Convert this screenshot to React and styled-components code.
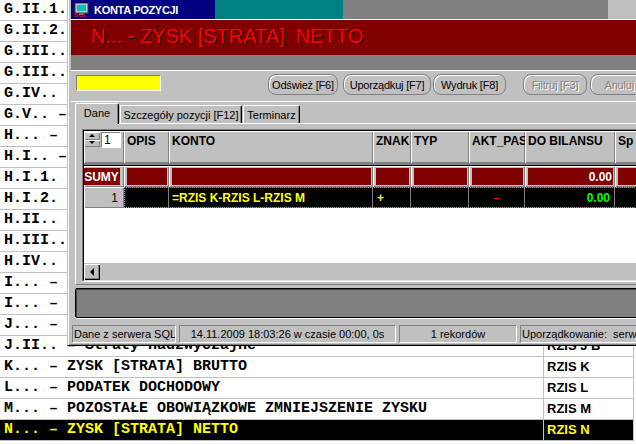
import React from "react";
import styled, { createGlobalStyle } from "styled-components";

const GlobalStyle = createGlobalStyle`
  html, body {
    margin: 0;
    padding: 0;
    background: #ffffff;
  }
  body {
    width: 636px;
    height: 444px;
    overflow: hidden;
  }
`;

const Screen = styled.div`
  position: relative;
  width: 636px;
  height: 444px;
  overflow: hidden;
  background: #ffffff;
  font-family: "Liberation Sans", Arial, sans-serif;
`;

/* ---------- background list ---------- */

const List = styled.div`
  display: flex;
  flex-direction: column;
  width: 633px;
  border-right: 1px solid #c0c0c0;
`;

const ListRow = styled.div`
  display: grid;
  grid-template-columns: 544px 1fr;
  height: 20px;
  border-bottom: 1px solid #c0c0c0;
  background: ${(p) => (p.$active ? "#000000" : "#ffffff")};
  color: ${(p) => (p.$active ? "#ffff00" : "#000000")};
`;

const NameCell = styled.div`
  font-family: "Liberation Mono", "DejaVu Sans Mono", monospace;
  font-weight: bold;
  font-size: 15px;
  line-height: 20px;
  padding-left: 4px;
  white-space: pre;
  overflow: hidden;
  border-right: 1px solid #c0c0c0;
`;

const CodeCell = styled.div`
  font-weight: bold;
  font-size: 13px;
  line-height: 20px;
  padding-left: 3px;
  white-space: nowrap;
  overflow: hidden;
`;

/* ---------- window ---------- */

const Window = styled.div`
  position: absolute;
  left: 67px;
  top: 0;
  width: 640px;
  display: flex;
  flex-direction: column;
  background: #c0c0c0;
  border-left: 1px solid #c0c0c0;
  border-bottom: 1px solid #000000;
  box-shadow: inset 1px 0 #ffffff, inset 0 -1px #808080;
  padding: 0 0 2px 3px;
  color: #000000;
`;

const TitleBar = styled.div`
  display: flex;
  align-items: center;
  gap: 4px;
  height: 19px;
  padding-left: 3px;
  background: linear-gradient(
    to right,
    #000080 0,
    #000080 144px,
    #008080 144px,
    #008080 272px,
    #808080 272px,
    #808080 537px,
    #c0c0c0 537px
  );
  border-bottom: 1px solid #ffffff;
`;

const TitleText = styled.span`
  color: #ffffff;
  font-weight: bold;
  font-size: 11px;
  letter-spacing: -0.3px;
  margin-left: 1px;
`;

const Banner = styled.div`
  height: 35px;
  line-height: 33px;
  padding-left: 20px;
  background: #800000;
  color: #ff0000;
  font-size: 20px;
  white-space: pre;
  text-shadow: 1px 1px 0 #000000;
`;

const GrayBand = styled.div`
  height: 15px;
  background: #808080;
  border-bottom: 1px solid #ffffff;
`;

const Toolbar = styled.div`
  display: flex;
  align-items: flex-start;
  height: 26px;
  padding: 4px 0 0 5px;
  border-bottom: 1px solid #ffffff;
`;

const YellowBox = styled.div`
  width: 83px;
  height: 14px;
  background: #ffff00;
  border: 1px solid;
  border-color: #808080 #ffffff #ffffff #808080;
`;

const ToolButton = styled.div`
  box-sizing: border-box;
  flex: none;
  width: ${(p) => p.$w}px;
  height: 21px;
  margin-left: ${(p) => p.$ml}px;
  margin-top: ${(p) => p.$mt || -1}px;
  display: flex;
  align-items: center;
  justify-content: center;
  border: 1px solid #808080;
  border-radius: 8px;
  box-shadow: inset 1px 1px #ffffff;
  font-size: 11px;
  letter-spacing: -0.2px;
  white-space: nowrap;
  overflow: hidden;
  color: ${(p) => (p.$disabled ? "#808080" : "#000000")};
  text-shadow: ${(p) => (p.$disabled ? "1px 1px 0 #ffffff" : "none")};
`;

/* ---------- tabs ---------- */

const TabStrip = styled.div`
  display: flex;
  align-items: flex-end;
  height: 21px;
  padding-left: 4px;
  position: relative;
  z-index: 1;
`;

const Tab = styled.div`
  box-sizing: border-box;
  width: ${(p) => p.$w}px;
  height: ${(p) => (p.$active ? 21 : 18)}px;
  margin-right: 1px;
  margin-bottom: ${(p) => (p.$active ? -1 : 0)}px;
  display: flex;
  align-items: center;
  justify-content: center;
  padding-bottom: ${(p) => (p.$active ? 2 : 0)}px;
  background: #c0c0c0;
  border-top: 1px solid #ffffff;
  border-left: 1px solid #ffffff;
  border-right: 1px solid #000000;
  border-radius: 2px 2px 0 0;
  box-shadow: inset -1px 0 #808080;
  font-size: 11px;
  white-space: nowrap;
`;

const TabPage = styled.div`
  margin-left: 4px;
  padding: 5px 0 2px 6px;
  border-top: 1px solid #ffffff;
  border-left: 1px solid #ffffff;
  border-bottom: 1px solid #808080;
`;

/* ---------- data grid ---------- */

const GridFrame = styled.div`
  border-top: 1px solid #808080;
  border-left: 1px solid #808080;
  border-bottom: 1px solid #ffffff;
`;

const GridInner = styled.div`
  display: flex;
  flex-direction: column;
  height: 149px;
  background: #ffffff;
  border-top: 1px solid #000000;
  border-left: 1px solid #000000;
  border-bottom: 1px solid #dfdfdf;
  overflow: hidden;
`;

const GridRow = styled.div`
  display: flex;
  flex: none;
  height: ${(p) => p.$h}px;
`;

const HeadCell = styled.div`
  box-sizing: border-box;
  flex: none;
  width: ${(p) => p.$w}px;
  height: 100%;
  padding: 3px 0 0 3px;
  background: #c0c0c0;
  box-shadow: inset 1px 1px #ffffff, inset -1px -1px #808080;
  font-size: 12px;
  font-weight: bold;
  white-space: nowrap;
  overflow: hidden;
`;

const IndicatorHead = styled(HeadCell)`
  display: flex;
  align-items: flex-start;
  gap: 1px;
  padding: 1px 0 0 0;
`;

const Spinner = styled.div`
  display: flex;
  flex-direction: column;
  width: 16px;
  height: 15px;
`;

const SpinHalf = styled.div`
  flex: 1;
  display: flex;
  align-items: center;
  justify-content: center;
  background: #c0c0c0;
  box-shadow: inset 1px 1px #ffffff, inset -1px -1px #808080;
`;

const SpinInput = styled.div`
  box-sizing: border-box;
  width: 20px;
  height: 16px;
  padding-left: 2px;
  background: #ffffff;
  border: 1px solid;
  border-color: #808080 #ffffff #ffffff #808080;
  font-size: 12px;
  font-weight: normal;
  line-height: 14px;
`;

const Separator = styled.div`
  flex: none;
  height: 2px;
  background: #808080;
  border-bottom: 1px solid #000000;
`;

const SumCell = styled.div`
  box-sizing: border-box;
  flex: none;
  display: flex;
  width: ${(p) => p.$w}px;
  height: 100%;
  padding: 2px 2px 2px 3px;
  background: #c0c0c0;
  box-shadow: inset 1px 1px #ffffff, inset -1px -1px #808080;
`;

const SumFill = styled.div`
  flex: 1;
  display: flex;
  align-items: center;
  justify-content: ${(p) => p.$align || "flex-end"};
  padding-right: 1px;
  background: #800000;
  color: #ffffff;
  font-size: 12px;
  font-weight: bold;
`;

const RowIndicator = styled.div`
  box-sizing: border-box;
  flex: none;
  width: 40px;
  height: 100%;
  padding-right: 6px;
  display: flex;
  align-items: center;
  justify-content: flex-end;
  background: #c0c0c0;
  box-shadow: inset 1px 1px #ffffff, inset -1px -1px #808080;
  font-size: 12px;
`;

const FocusRow = styled.div`
  display: flex;
  flex: 1;
  background: #000000;
  border: 1px dotted #00ff00;
  border-right: none;
`;

const DataCell = styled.div`
  box-sizing: border-box;
  flex: none;
  display: flex;
  align-items: center;
  justify-content: ${(p) => p.$align || "flex-start"};
  width: ${(p) => p.$w}px;
  padding: 0 ${(p) => p.$pr || 0}px 0 ${(p) => p.$pl || 0}px;
  border-right: 1px solid #808080;
  color: ${(p) => p.$color || "#ffff00"};
  font-size: 12px;
  font-weight: bold;
  white-space: nowrap;
  overflow: hidden;
`;

const GridBody = styled.div`
  flex: 1;
  background: #ffffff;
`;

const HScroll = styled.div`
  display: flex;
  flex: none;
  height: 16px;
  background: #c0c0c0;
  border-top: 1px solid #c0c0c0;
`;

const ScrollButton = styled.div`
  width: 16px;
  height: 16px;
  display: flex;
  align-items: center;
  justify-content: center;
  background: #c0c0c0;
  box-shadow: inset 1px 1px #ffffff, inset -1px -1px #000000, inset -2px -2px #808080;
`;

/* ---------- bottom area ---------- */

const GrayPanel = styled.div`
  height: 28px;
  margin: 3px 0 0 4px;
  background: #808080;
  border: 1px solid #000000;
  border-radius: 2px 0 0 2px;
  box-shadow: inset 1px 1px #404040, 0 1px #ffffff;
`;

const StatusBar = styled.div`
  display: flex;
  gap: 3px;
  margin: 7px 0 0 1px;
`;

const StatusPanel = styled.div`
  box-sizing: border-box;
  flex: none;
  width: ${(p) => p.$w}px;
  height: 18px;
  display: flex;
  align-items: center;
  justify-content: ${(p) => (p.$center ? "center" : "flex-start")};
  padding-left: ${(p) => (p.$center ? 0 : 1)}px;
  border: 1px solid;
  border-color: #808080 #ffffff #ffffff #808080;
  font-size: 11px;
  white-space: pre;
  overflow: hidden;
`;

/* ---------- data ---------- */

const listRows = [
  ["G.II.1.", "od jednostek powiązanych", "RZIS G II 1"],
  ["G.II.2.", "od pozostałych jednostek", "RZIS G II 2"],
  ["G.III..", "Zysk ze zbycia inwestycji", "RZIS G III"],
  ["G.III..", "Aktualizacja wartości", "RZIS G III"],
  ["G.IV..", "Aktualizacja wartości inwestycji", "RZIS G IV"],
  ["G.V..", "Inne", "RZIS G V"],
  ["H...", "KOSZTY FINANSOWE", "RZIS H"],
  ["H.I..", "Odsetki, w tym:", "RZIS H I"],
  ["H.I.1.", "dla jednostek powiązanych", "RZIS H I 1"],
  ["H.I.2.", "dla pozostałych jednostek", "RZIS H I 2"],
  ["H.II..", "Strata ze zbycia inwestycji", "RZIS H II"],
  ["H.III..", "Aktualizacja wartości inwestycji", "RZIS H III"],
  ["H.IV..", "Inne", "RZIS H IV"],
  ["I...", "ZYSK [STRATA] Z DZIAŁALNOŚCI GOSPODARCZEJ", "RZIS I"],
  ["I...", "ZYSK [STRATA] Z DZIAŁALNOŚCI GOSPODARCZEJ", "RZIS I"],
  ["J...", "WYNIK ZDARZEŃ NADZWYCZAJNYCH", "RZIS J"],
  ["J.II..", "Straty nadzwyczajne", "RZIS J B"],
  ["K...", "ZYSK [STRATA] BRUTTO", "RZIS K"],
  ["L...", "PODATEK DOCHODOWY", "RZIS L"],
  ["M...", "POZOSTAŁE OBOWIĄZKOWE ZMNIEJSZENIE ZYSKU", "RZIS M"],
  ["N...", "ZYSK [STRATA] NETTO", "RZIS N"],
];

const columns = [
  { key: "opis", title: "OPIS", w: 45 },
  { key: "konto", title: "KONTO", w: 204 },
  { key: "znak", title: "ZNAK", w: 38 },
  { key: "typ", title: "TYP", w: 58 },
  { key: "akt", title: "AKT_PAS", w: 56 },
  { key: "do", title: "DO BILANSU", w: 90 },
  { key: "sp", title: "Sp", w: 60 },
];

function WindowIcon() {
  return (
    <svg width="15" height="14" viewBox="0 0 15 14">
      <rect x="1" y="0" width="13" height="10" fill="#c0c0c0" />
      <rect x="1" y="0" width="13" height="10" fill="none" stroke="#404040" strokeWidth="1" />
      <rect x="3" y="2" width="9" height="6" fill="#00c0c0" />
      <rect x="5" y="10" width="5" height="2" fill="#808080" />
      <text x="0" y="13.5" fontSize="6" fontWeight="bold" fill="#ff0000" fontFamily="Liberation Sans, sans-serif">
        SQL
      </text>
    </svg>
  );
}

function Arrow({ dir }) {
  const pts = {
    up: "0,3 3,0 6,3",
    down: "0,0 3,3 6,0",
    left: "4,0 0,4 4,8",
  };
  const size = dir === "left" ? [5, 8] : [7, 4];
  return (
    <svg width={size[0]} height={size[1]} viewBox={`0 0 ${size[0]} ${size[1]}`}>
      <polygon points={pts[dir]} fill="#000000" />
    </svg>
  );
}

export default function App() {
  return (
    <Screen>
      <GlobalStyle />
      <List>
        {listRows.map(([code, name, konto], i) => (
          <ListRow key={i} $active={i === listRows.length - 1}>
            <NameCell>{`${code} – ${name}`}</NameCell>
            <CodeCell>{konto}</CodeCell>
          </ListRow>
        ))}
      </List>

      <Window>
        <TitleBar>
          <WindowIcon />
          <TitleText>KONTA POZYCJI</TitleText>
        </TitleBar>
        <Banner>{"N... - ZYSK [STRATA]  NETTO"}</Banner>
        <GrayBand />
        <Toolbar>
          <YellowBox />
          <ToolButton $w={70} $ml={107}>Odśwież [F6]</ToolButton>
          <ToolButton $w={88} $ml={5}>Uporządkuj [F7]</ToolButton>
          <ToolButton $w={73} $ml={2} $mt={0}>Wydruk [F8]</ToolButton>
          <ToolButton $w={64} $ml={17} $disabled>Filtruj [F3]</ToolButton>
          <ToolButton $w={96} $ml={3} $disabled>Anuluj filtr [F4]</ToolButton>
        </Toolbar>

        <TabStrip>
          <Tab $w={44} $active>Dane</Tab>
          <Tab $w={122}>Szczegóły pozycji [F12]</Tab>
          <Tab $w={57}>Terminarz</Tab>
        </TabStrip>
        <TabPage>
          <GridFrame>
            <GridInner>
              <GridRow $h={32}>
                <IndicatorHead $w={40}>
                  <Spinner>
                    <SpinHalf>
                      <Arrow dir="up" />
                    </SpinHalf>
                    <SpinHalf>
                      <Arrow dir="down" />
                    </SpinHalf>
                  </Spinner>
                  <SpinInput>1</SpinInput>
                </IndicatorHead>
                {columns.map((c) => (
                  <HeadCell key={c.key} $w={c.w}>
                    {c.title}
                  </HeadCell>
                ))}
              </GridRow>
              <Separator />
              <GridRow $h={21}>
                <SumCell $w={40} style={{ paddingLeft: 0, paddingRight: 4 }}>
                  <SumFill $align="center">SUMY</SumFill>
                </SumCell>
                {columns.map((c) => (
                  <SumCell key={c.key} $w={c.w}>
                    <SumFill>{c.key === "do" ? "0.00" : ""}</SumFill>
                  </SumCell>
                ))}
              </GridRow>
              <GridRow $h={21}>
                <RowIndicator>1</RowIndicator>
                <FocusRow>
                  <DataCell $w={44} />
                  <DataCell $w={204} $pl={3}>
                    =RZIS K-RZIS L-RZIS M
                  </DataCell>
                  <DataCell $w={38} $pl={4}>
                    +
                  </DataCell>
                  <DataCell $w={58} />
                  <DataCell $w={56} $align="center" $color="#ff0000">
                    –
                  </DataCell>
                  <DataCell $w={90} $align="flex-end" $pr={4} $color="#00ff00">
                    0.00
                  </DataCell>
                  <DataCell $w={60} />
                </FocusRow>
              </GridRow>
              <GridBody />
              <HScroll>
                <ScrollButton>
                  <Arrow dir="left" />
                </ScrollButton>
              </HScroll>
            </GridInner>
          </GridFrame>
        </TabPage>

        <GrayPanel />

        <StatusBar>
          <StatusPanel $w={104}>Dane z serwera SQL</StatusPanel>
          <StatusPanel $w={217} $center>
            14.11.2009 18:03:26 w czasie 00:00, 0s
          </StatusPanel>
          <StatusPanel $w={118} $center>
            1 rekordów
          </StatusPanel>
          <StatusPanel $w={160}>{"Uporządkowanie:  serwer"}</StatusPanel>
        </StatusBar>
      </Window>
    </Screen>
  );
}
